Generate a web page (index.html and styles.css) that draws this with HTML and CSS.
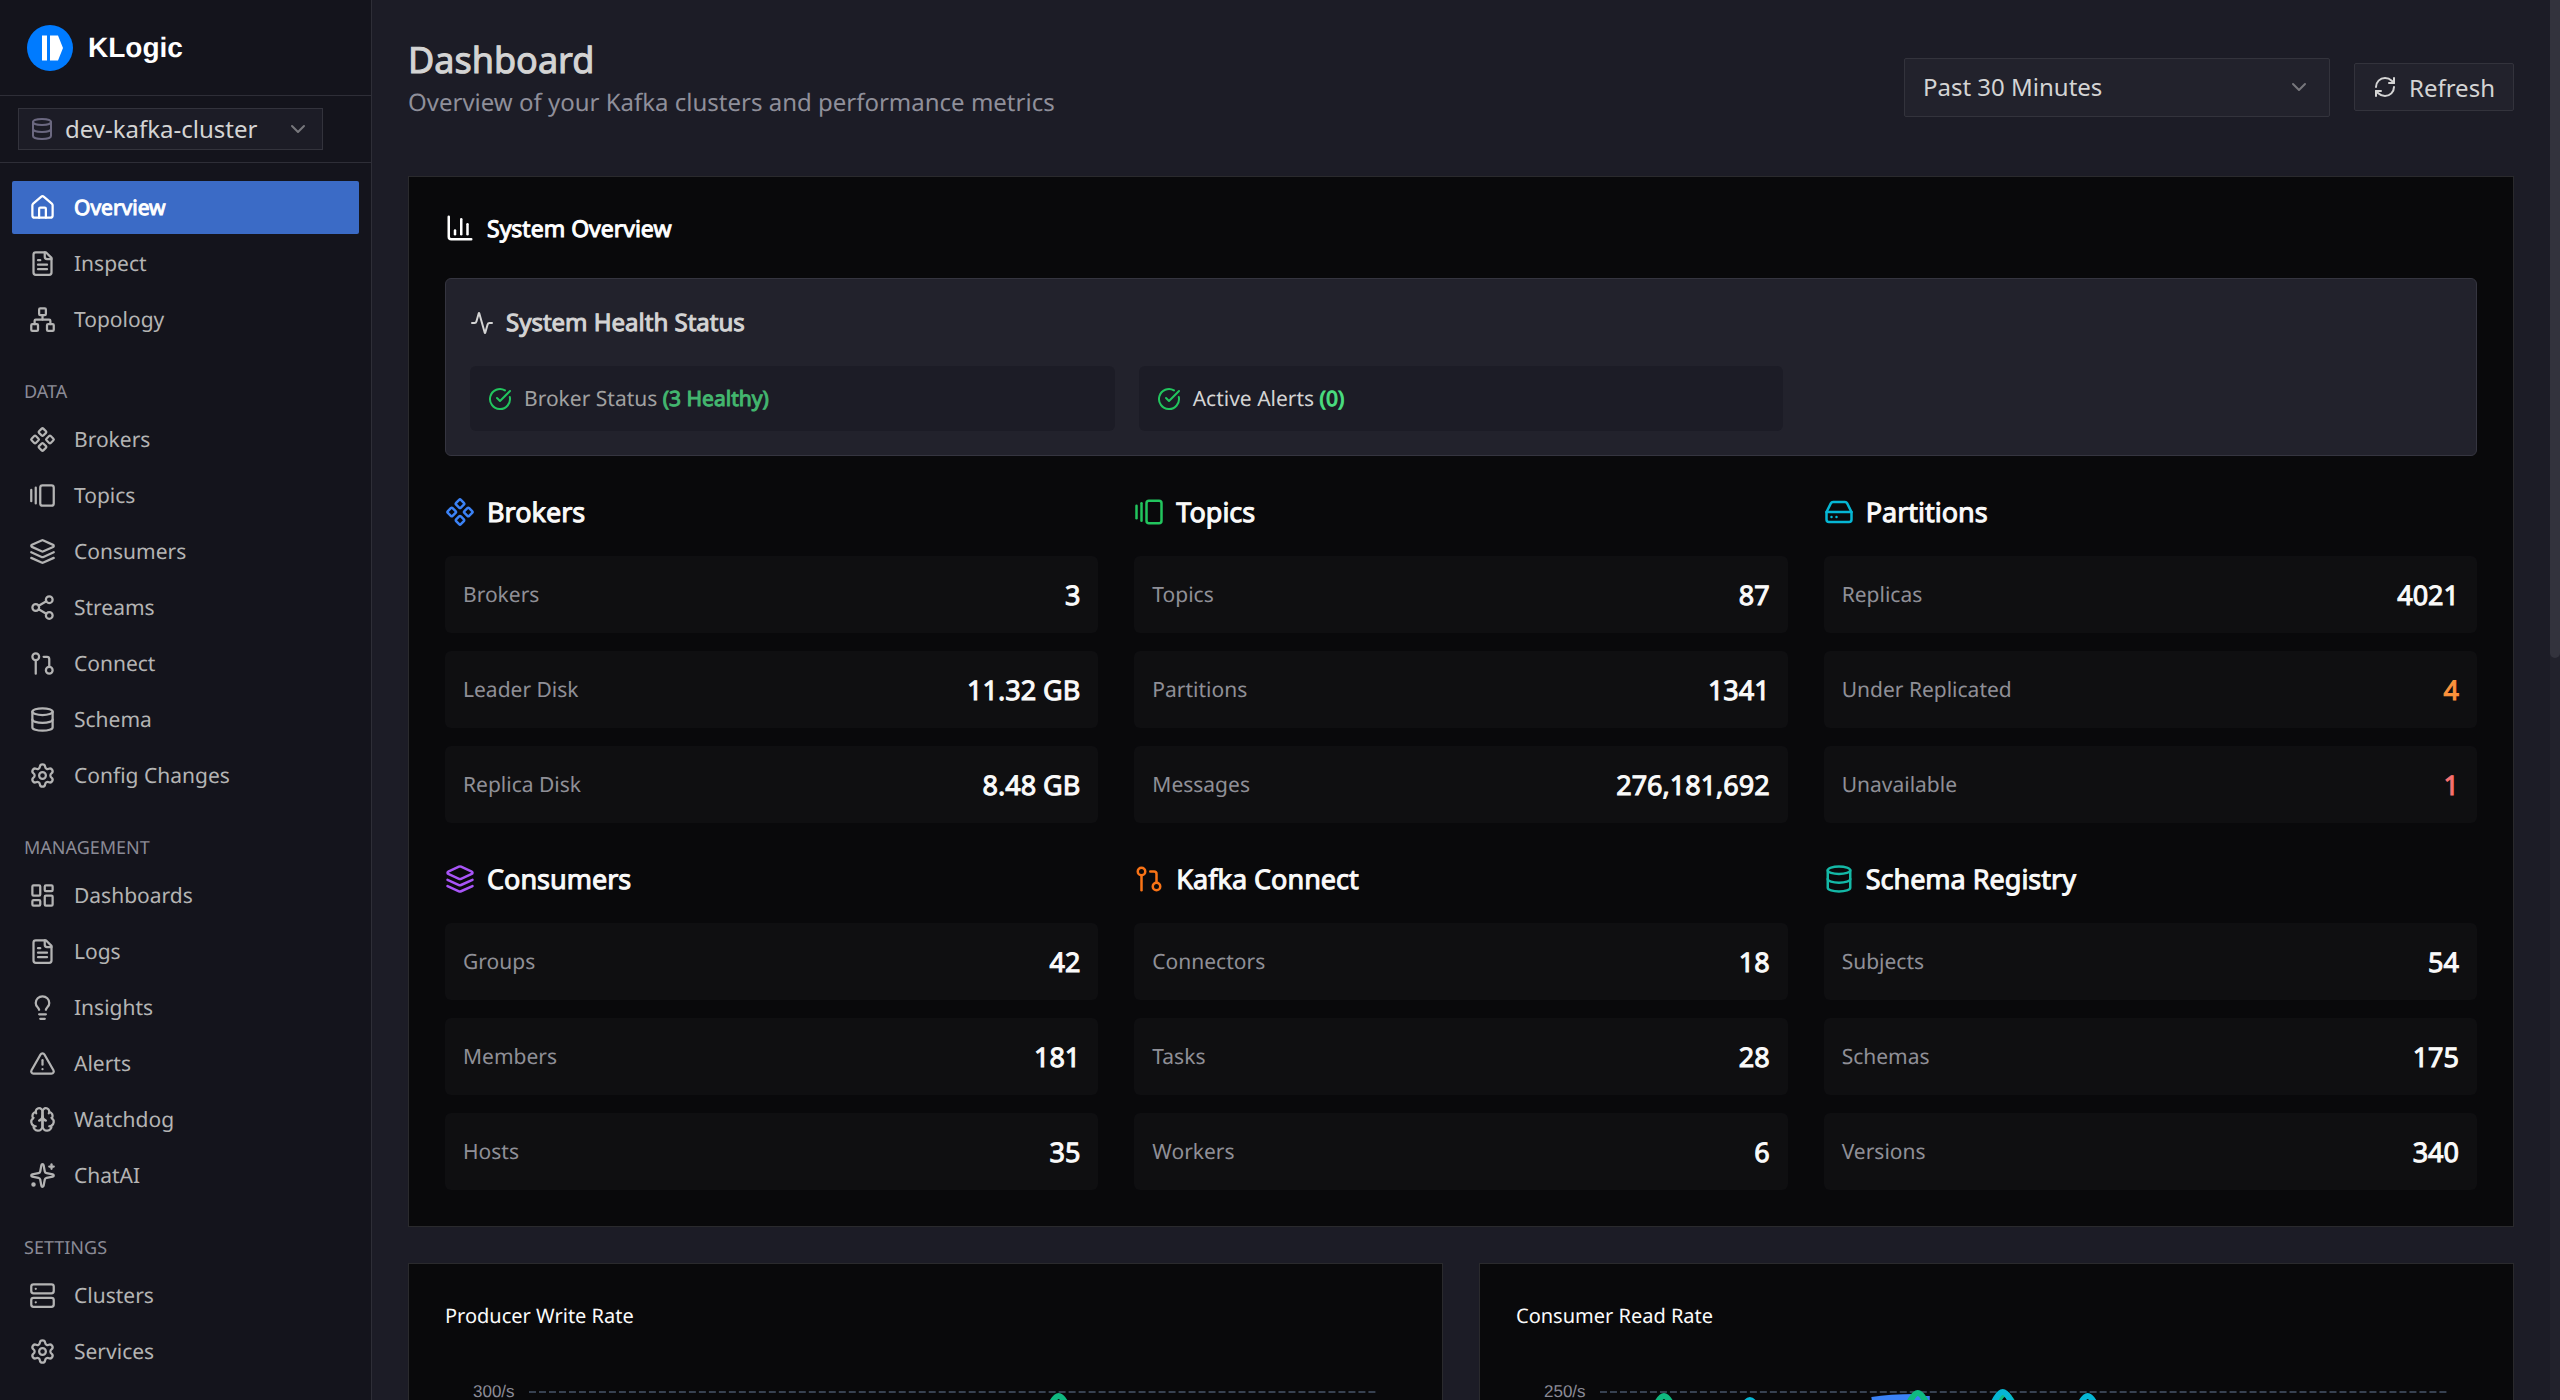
FILE: index.html
```
<!DOCTYPE html>
<html lang="en">

<head>
  <meta charset="UTF-8">
  <meta name="viewport" content="width=device-width, initial-scale=1.0">
  <title>KLogic - Dashboard</title>
  <link rel="stylesheet" href="styles.css">
</head>

<body>

  <!-- Icon set -->
  <svg class="sprite" aria-hidden="true">
    <symbol id="i-home" viewBox="0 0 24 24"><path d="M15 21v-8a1 1 0 0 0-1-1h-4a1 1 0 0 0-1 1v8"/><path d="M3 10a2 2 0 0 1 .709-1.528l7-6a2 2 0 0 1 2.582 0l7 6A2 2 0 0 1 21 10v9a2 2 0 0 1-2 2H5a2 2 0 0 1-2-2z"/></symbol>
    <symbol id="i-file" viewBox="0 0 24 24"><path d="M15 2H6a2 2 0 0 0-2 2v16a2 2 0 0 0 2 2h12a2 2 0 0 0 2-2V7Z"/><path d="M14 2v4a2 2 0 0 0 2 2h4"/><path d="M10 9H8"/><path d="M16 13H8"/><path d="M16 17H8"/></symbol>
    <symbol id="i-network" viewBox="0 0 24 24"><rect x="16" y="16" width="6" height="6" rx="1"/><rect x="2" y="16" width="6" height="6" rx="1"/><rect x="9" y="2" width="6" height="6" rx="1"/><path d="M5 16v-3a1 1 0 0 1 1-1h12a1 1 0 0 1 1 1v3"/><path d="M12 12V8"/></symbol>
    <symbol id="i-component" viewBox="0 0 24 24"><path d="M15.536 11.293a1 1 0 0 0 0 1.414l2.376 2.377a1 1 0 0 0 1.414 0l2.377-2.377a1 1 0 0 0 0-1.414l-2.377-2.377a1 1 0 0 0-1.414 0z"/><path d="M2.297 11.293a1 1 0 0 0 0 1.414l2.377 2.377a1 1 0 0 0 1.414 0l2.377-2.377a1 1 0 0 0 0-1.414L6.088 8.916a1 1 0 0 0-1.414 0z"/><path d="M8.916 17.912a1 1 0 0 0 0 1.415l2.377 2.376a1 1 0 0 0 1.414 0l2.377-2.376a1 1 0 0 0 0-1.415l-2.377-2.376a1 1 0 0 0-1.414 0z"/><path d="M8.916 4.674a1 1 0 0 0 0 1.414l2.377 2.376a1 1 0 0 0 1.414 0l2.377-2.376a1 1 0 0 0 0-1.414l-2.377-2.377a1 1 0 0 0-1.414 0z"/></symbol>
    <symbol id="i-gallery" viewBox="0 0 24 24"><path d="M2 7v10"/><path d="M6 5v14"/><rect width="12" height="18" x="10" y="3" rx="2"/></symbol>
    <symbol id="i-layers" viewBox="0 0 24 24"><path d="m12.83 2.18a2 2 0 0 0-1.66 0L2.6 6.08a1 1 0 0 0 0 1.83l8.58 3.91a2 2 0 0 0 1.66 0l8.58-3.9a1 1 0 0 0 0-1.83Z"/><path d="m22 17.65-9.17 4.16a2 2 0 0 1-1.66 0L2 17.65"/><path d="m22 12.65-9.17 4.16a2 2 0 0 1-1.66 0L2 12.65"/></symbol>
    <symbol id="i-share" viewBox="0 0 24 24"><circle cx="18" cy="5" r="3"/><circle cx="6" cy="12" r="3"/><circle cx="18" cy="19" r="3"/><path d="M8.59 13.51l6.83 3.98"/><path d="M15.41 6.51l-6.82 3.98"/></symbol>
    <symbol id="i-connect" viewBox="0 0 24 24"><circle cx="18" cy="18" r="3"/><circle cx="6" cy="6" r="3"/><path d="M13 6h3a2 2 0 0 1 2 2v7"/><path d="M6 9v12"/></symbol>
    <symbol id="i-database" viewBox="0 0 24 24"><ellipse cx="12" cy="5" rx="9" ry="3"/><path d="M3 5v14a9 3 0 0 0 18 0V5"/><path d="M3 12a9 3 0 0 0 18 0"/></symbol>
    <symbol id="i-settings" viewBox="0 0 24 24"><path d="M9.671 4.136a2.34 2.34 0 0 1 4.659 0 2.34 2.34 0 0 0 3.319 1.915 2.34 2.34 0 0 1 2.33 4.033 2.34 2.34 0 0 0 0 3.831 2.34 2.34 0 0 1-2.33 4.033 2.34 2.34 0 0 0-3.319 1.915 2.34 2.34 0 0 1-4.659 0 2.34 2.34 0 0 0-3.32-1.915 2.34 2.34 0 0 1-2.33-4.033 2.34 2.34 0 0 0 0-3.831A2.34 2.34 0 0 1 6.35 6.051a2.34 2.34 0 0 0 3.319-1.915"/><circle cx="12" cy="12" r="3"/></symbol>
    <symbol id="i-dashboard" viewBox="0 0 24 24"><rect width="7" height="9" x="3" y="3" rx="1"/><rect width="7" height="5" x="14" y="3" rx="1"/><rect width="7" height="9" x="14" y="12" rx="1"/><rect width="7" height="5" x="3" y="16" rx="1"/></symbol>
    <symbol id="i-bulb" viewBox="0 0 24 24"><path d="M15 14c.2-1 .7-1.700 1.500-2.500 1-.9 1.500-2.200 1.500-3.500A6 6 0 0 0 6 8c0 1 .2 2.200 1.500 3.500.7.7 1.300 1.500 1.500 2.500"/><path d="M9 18h6"/><path d="M10 22h4"/></symbol>
    <symbol id="i-alert" viewBox="0 0 24 24"><path d="m21.730 18-8-14a2 2 0 0 0-3.480 0l-8 14A2 2 0 0 0 4 21h16a2 2 0 0 0 1.730-3"/><path d="M12 9v4"/><path d="M12 17h.01"/></symbol>
    <symbol id="i-brain" viewBox="0 0 24 24"><path d="M12 5a3 3 0 1 0-5.997.125 4 4 0 0 0-2.526 5.770 4 4 0 0 0 .556 6.588A4 4 0 1 0 12 18Z"/><path d="M12 5a3 3 0 1 1 5.997.125 4 4 0 0 1 2.526 5.770 4 4 0 0 1-.556 6.588A4 4 0 1 1 12 18Z"/><path d="M15 13a4.500 4.500 0 0 1-3-4 4.500 4.500 0 0 1-3 4"/><path d="M17.599 6.500a3 3 0 0 0 .399-1.375"/><path d="M6.003 5.125A3 3 0 0 0 6.401 6.500"/><path d="M3.477 10.896a4 4 0 0 1 .585-.396"/><path d="M19.938 10.500a4 4 0 0 1 .585.396"/><path d="M6 18a4 4 0 0 1-1.967-.516"/><path d="M19.967 17.484A4 4 0 0 1 18 18"/></symbol>
    <symbol id="i-sparkles" viewBox="0 0 24 24"><path d="M11.017 2.814a1 1 0 0 1 1.966 0l1.051 5.558a2 2 0 0 0 1.594 1.594l5.558 1.051a1 1 0 0 1 0 1.966l-5.558 1.051a2 2 0 0 0-1.594 1.594l-1.051 5.558a1 1 0 0 1-1.966 0l-1.051-5.558a2 2 0 0 0-1.594-1.594l-5.558-1.051a1 1 0 0 1 0-1.966l5.558-1.051a2 2 0 0 0 1.594-1.594z"/><path d="M20 2v4"/><path d="M22 4h-4"/><circle cx="4" cy="20" r="1"/></symbol>
    <symbol id="i-server" viewBox="0 0 24 24"><rect width="20" height="8" x="2" y="2" rx="2"/><rect width="20" height="8" x="2" y="14" rx="2"/><path d="M6 6h.01"/><path d="M6 18h.01"/></symbol>
    <symbol id="i-drive" viewBox="0 0 24 24"><path d="M22 12H2"/><path d="M5.450 5.110 2 12v6a2 2 0 0 0 2 2h16a2 2 0 0 0 2-2v-6l-3.450-6.890A2 2 0 0 0 16.760 4H7.240a2 2 0 0 0-1.790 1.110z"/><path d="M6 16h.01"/><path d="M10 16h.01"/></symbol>
    <symbol id="i-chart" viewBox="0 0 24 24"><path d="M3 3v16a2 2 0 0 0 2 2h16"/><path d="M18 17V9"/><path d="M13 17V5"/><path d="M8 17v-3"/></symbol>
    <symbol id="i-activity" viewBox="0 0 24 24"><path d="M22 12h-2.480a2 2 0 0 0-1.930 1.460l-2.350 8.360a.25.25 0 0 1-.480 0L9.240 2.180a.25.25 0 0 0-.480 0l-2.350 8.360A2 2 0 0 1 4.490 12H2"/></symbol>
    <symbol id="i-check" viewBox="0 0 24 24"><path d="M21.801 10A10 10 0 1 1 17 3.335"/><path d="m9 11 3 3L22 4"/></symbol>
    <symbol id="i-refresh" viewBox="0 0 24 24"><path d="M3 12a9 9 0 0 1 9-9 9.750 9.750 0 0 1 6.740 2.740L21 8"/><path d="M21 3v5h-5"/><path d="M21 12a9 9 0 0 1-9 9 9.750 9.750 0 0 1-6.740-2.740L3 16"/><path d="M8 16H3v5"/></symbol>
    <symbol id="i-chevron" viewBox="0 0 24 24"><path d="m6 9 6 6 6-6"/></symbol>
  </svg>

  <div class="app">

    <!-- Sidebar -->
    <aside class="sidebar">
      <div class="brand">
        <svg class="logo" viewBox="0 0 46 46" aria-hidden="true">
          <circle cx="23" cy="23" r="23" fill="#007bff"/>
          <path d="M15 10.500h5v25h-5zM23 10.500h8l5 12.500-5 12.500h-8z" fill="#fff"/>
        </svg>
        <span>KLogic</span>
      </div>

      <div class="cluster">
        <div class="picker">
          <svg class="icon"><use href="#i-database"/></svg>
          <select aria-label="Cluster">
            <option>dev-kafka-cluster</option>
          </select>
          <svg class="icon chevron"><use href="#i-chevron"/></svg>
        </div>
      </div>

      <nav class="menu">
        <a href="#overview" class="active"><svg class="icon"><use href="#i-home"/></svg>Overview</a>
        <a href="#inspect"><svg class="icon"><use href="#i-file"/></svg>Inspect</a>
        <a href="#topology"><svg class="icon"><use href="#i-network"/></svg>Topology</a>

        <h2>DATA</h2>
        <a href="#brokers"><svg class="icon"><use href="#i-component"/></svg>Brokers</a>
        <a href="#topics"><svg class="icon"><use href="#i-gallery"/></svg>Topics</a>
        <a href="#consumers"><svg class="icon"><use href="#i-layers"/></svg>Consumers</a>
        <a href="#streams"><svg class="icon"><use href="#i-share"/></svg>Streams</a>
        <a href="#connect"><svg class="icon"><use href="#i-connect"/></svg>Connect</a>
        <a href="#schema"><svg class="icon"><use href="#i-database"/></svg>Schema</a>
        <a href="#config"><svg class="icon"><use href="#i-settings"/></svg>Config Changes</a>

        <h2>MANAGEMENT</h2>
        <a href="#dashboards"><svg class="icon"><use href="#i-dashboard"/></svg>Dashboards</a>
        <a href="#logs"><svg class="icon"><use href="#i-file"/></svg>Logs</a>
        <a href="#insights"><svg class="icon"><use href="#i-bulb"/></svg>Insights</a>
        <a href="#alerts"><svg class="icon"><use href="#i-alert"/></svg>Alerts</a>
        <a href="#watchdog"><svg class="icon"><use href="#i-brain"/></svg>Watchdog</a>
        <a href="#chat"><svg class="icon"><use href="#i-sparkles"/></svg>ChatAI</a>

        <h2>SETTINGS</h2>
        <a href="#clusters"><svg class="icon"><use href="#i-server"/></svg>Clusters</a>
        <a href="#services"><svg class="icon"><use href="#i-settings"/></svg>Services</a>
      </nav>
    </aside>

    <!-- Main -->
    <main>
      <header class="page-head">
        <div>
          <h1>Dashboard</h1>
          <p>Overview of your Kafka clusters and performance metrics</p>
        </div>
        <div class="controls">
          <div class="picker picker-lg">
            <select aria-label="Time range">
              <option>Past 30 Minutes</option>
            </select>
            <svg class="icon chevron"><use href="#i-chevron"/></svg>
          </div>
          <button type="button"><svg class="icon"><use href="#i-refresh"/></svg>Refresh</button>
        </div>
      </header>

      <!-- System overview -->
      <section class="card">
        <h2 class="card-title"><svg class="icon icon-lg"><use href="#i-chart"/></svg>System Overview</h2>

        <div class="health">
          <h3><svg class="icon"><use href="#i-activity"/></svg>System Health Status</h3>
          <div class="checks">
            <div class="check"><svg class="icon"><use href="#i-check"/></svg><span>Broker Status <b>(3 Healthy)</b></span></div>
            <div class="check bright"><svg class="icon"><use href="#i-check"/></svg><span>Active Alerts <b>(0)</b></span></div>
          </div>
        </div>

        <div class="groups">
          <div class="group">
            <h3><svg class="icon icon-lg blue"><use href="#i-component"/></svg>Brokers</h3>
            <dl>
              <div class="stat"><dt>Brokers</dt><dd>3</dd></div>
              <div class="stat"><dt>Leader Disk</dt><dd>11.32 GB</dd></div>
              <div class="stat"><dt>Replica Disk</dt><dd>8.48 GB</dd></div>
            </dl>
          </div>
          <div class="group">
            <h3><svg class="icon icon-lg green"><use href="#i-gallery"/></svg>Topics</h3>
            <dl>
              <div class="stat"><dt>Topics</dt><dd>87</dd></div>
              <div class="stat"><dt>Partitions</dt><dd>1341</dd></div>
              <div class="stat"><dt>Messages</dt><dd>276,181,692</dd></div>
            </dl>
          </div>
          <div class="group">
            <h3><svg class="icon icon-lg cyan"><use href="#i-drive"/></svg>Partitions</h3>
            <dl>
              <div class="stat"><dt>Replicas</dt><dd>4021</dd></div>
              <div class="stat"><dt>Under Replicated</dt><dd class="warn">4</dd></div>
              <div class="stat"><dt>Unavailable</dt><dd class="bad">1</dd></div>
            </dl>
          </div>
          <div class="group">
            <h3><svg class="icon icon-lg purple"><use href="#i-layers"/></svg>Consumers</h3>
            <dl>
              <div class="stat"><dt>Groups</dt><dd>42</dd></div>
              <div class="stat"><dt>Members</dt><dd>181</dd></div>
              <div class="stat"><dt>Hosts</dt><dd>35</dd></div>
            </dl>
          </div>
          <div class="group">
            <h3><svg class="icon icon-lg orange"><use href="#i-connect"/></svg>Kafka Connect</h3>
            <dl>
              <div class="stat"><dt>Connectors</dt><dd>18</dd></div>
              <div class="stat"><dt>Tasks</dt><dd>28</dd></div>
              <div class="stat"><dt>Workers</dt><dd>6</dd></div>
            </dl>
          </div>
          <div class="group">
            <h3><svg class="icon icon-lg teal"><use href="#i-database"/></svg>Schema Registry</h3>
            <dl>
              <div class="stat"><dt>Subjects</dt><dd>54</dd></div>
              <div class="stat"><dt>Schemas</dt><dd>175</dd></div>
              <div class="stat"><dt>Versions</dt><dd>340</dd></div>
            </dl>
          </div>
        </div>
      </section>

      <!-- Charts -->
      <div class="charts">
        <section class="card chart-card">
          <h2>Producer Write Rate</h2>
          <div class="plot">
            <span class="tick">300/s</span>
            <svg class="lines" viewBox="0 0 850 300" preserveAspectRatio="none">
              <path class="grid-line" d="M0 7H850"/>
              <path class="line-green" d="M508 50C518 30 524 11 530 11S542 30 552 50"/>
            </svg>
          </div>
        </section>
        <section class="card chart-card">
          <h2>Consumer Read Rate</h2>
          <div class="plot">
            <span class="tick">250/s</span>
            <svg class="lines" viewBox="0 0 850 300" preserveAspectRatio="none">
              <path class="grid-line" d="M0 7H850"/>
              <path class="line-blue" d="M272 15C290 12 305 12 316 12"/>
              <path class="line-blue" d="M300 14H330"/>
              <path class="line-green" d="M42 50C52 30 58 11 64 11S76 30 86 50"/>
              <path class="line-green" d="M296 46C306 26 312 8 318 8S330 26 340 46"/>
              <path class="line-green" d="M383 48C393 28 399 9 405 9S417 28 427 48"/>
              <path class="line-cyan" d="M128 54C138 34 144 15 150 15S162 34 172 54"/>
              <path class="line-cyan" d="M381 45C391 25 397 7 403 7S415 25 425 45"/>
              <path class="line-cyan" d="M466 50C476 30 482 11 488 11S500 30 510 50"/>
            </svg>
          </div>
        </section>
      </div>
    </main>
  </div>

</body>

</html>
```
FILE: styles.css
```
* {
  box-sizing: border-box;
}

body {
  margin: 0;
  background: #1c1c26;
  color: #d4d4d4;
  font-family: "Noto Sans", sans-serif;
  font-size: 24px;
  text-rendering: geometricPrecision;
  height: 100vh;
  overflow: hidden;
}

/* scrollbar thumb */
body::after {
  content: "";
  position: absolute;
  top: 0;
  right: 0;
  width: 10px;
  height: 47vh;
  border-radius: 0 0 5px 5px;
  background: #33333d;
}

h1, h2, h3, p, dl, dd {
  margin: 0;
  font-weight: 400;
}

.sprite {
  display: none;
}

.app {
  display: flex;
  height: 100vh;
}

.icon {
  width: 24px;
  height: 24px;
  flex: none;
  fill: none;
  stroke: currentColor;
  stroke-width: 2;
  stroke-linecap: round;
  stroke-linejoin: round;
}

.icon-lg {
  width: 30px;
  height: 30px;
}

/* Heavier text */
h1, h3, .card-title, .stat dd, .check b, .menu a.active {
  -webkit-text-stroke: 1px currentColor;
}

/* Sidebar */
.sidebar {
  width: 372px;
  flex: none;
  background: #14141c;
  border-right: 1px solid #2e2e37;
}

.brand {
  display: flex;
  align-items: center;
  gap: 15px;
  height: 96px;
  padding: 0 27px;
  border-bottom: 1px solid #2e2e37;
  color: #fff;
  font: bold 28px "Liberation Sans", sans-serif;
}

.logo {
  width: 46px;
  height: 46px;
}

.cluster {
  padding: 12px 48px 12px 18px;
  border-bottom: 1px solid #2e2e37;
}

.picker {
  display: flex;
  align-items: center;
  position: relative;
  height: 42px;
  border: 1px solid #33333c;
  background: #1c1c26;
  color: #6b6880;
}

.cluster .icon:first-child {
  position: absolute;
  left: 11px;
}

select {
  appearance: none;
  width: 100%;
  height: 100%;
  padding: 0 40px 2px 46px;
  border: 0;
  background: transparent;
  color: #d4d4d4;
  font: inherit;
}

.picker .chevron {
  position: absolute;
  right: 12px;
  color: #77777c;
  pointer-events: none;
}

.menu {
  padding: 18px 12px;
}

.menu a {
  display: flex;
  align-items: center;
  gap: 18px;
  height: 53px;
  margin-bottom: 3px;
  padding: 0 17px;
  border-radius: 2px;
  color: #b4b4b4;
  font-size: 21px;
  text-decoration: none;
}

.menu .icon {
  width: 27px;
  height: 27px;
}

.menu a.active {
  background: #3b6bc6;
  color: #fff;
}

.menu h2 {
  padding: 27px 12px 5px;
  color: #8b8b96;
  font-size: 18px;
  line-height: 32px;
}

/* Page header */
main {
  flex: 1;
  min-width: 0;
  padding: 36px 36px 0;
  border-right: 10px solid #22222c;
  overflow: hidden;
}

.page-head {
  display: flex;
  justify-content: space-between;
  height: 140px;
}

h1 {
  font-size: 36px;
  line-height: 48px;
}

.page-head p {
  color: #8f8f9a;
  line-height: 38px;
}

.controls {
  display: flex;
  align-items: center;
  gap: 24px;
  height: 102px;
}

.picker-lg {
  width: 426px;
  height: 59px;
  background: #22222c;
  border-radius: 2px;
}

.picker-lg select {
  padding-left: 18px;
}

.picker-lg .chevron {
  right: 18px;
}

button {
  display: flex;
  align-items: center;
  gap: 12px;
  height: 48px;
  padding: 0 18px;
  border: 1px solid #33333c;
  border-radius: 2px;
  background: #22222c;
  color: #d4d4d4;
  font: inherit;
}

/* Cards */
.card {
  padding: 36px;
  border: 1px solid #2a2a2d;
  background: #09090b;
}

.card-title {
  display: flex;
  align-items: center;
  gap: 12px;
  margin-bottom: 35px;
  color: #fff;
  font-size: 23px;
  line-height: 30px;
}

.health {
  padding: 24px;
  border: 1px solid #353540;
  border-radius: 6px;
  background: #22222c;
}

.health h3 {
  display: flex;
  align-items: center;
  gap: 12px;
  margin-bottom: 23px;
  font-size: 24px;
  line-height: 40px;
}

.checks {
  display: grid;
  grid-template-columns: repeat(3, 1fr);
  gap: 24px;
}

.check {
  display: flex;
  align-items: center;
  gap: 12px;
  height: 65px;
  padding: 0 18px;
  border-radius: 6px;
  background: #1c1c26;
  color: #a1a1a1;
  font-size: 21px;
}

.check .icon {
  color: #22c55e;
}

.check b {
  color: #43b76f;
  font-weight: 400;
}

.bright {
  color: #d4d4d4;
}

.bright b {
  color: #4ade80;
}

.groups {
  display: grid;
  grid-template-columns: repeat(3, 1fr);
  gap: 36px;
  margin-top: 36px;
}

.group h3 {
  display: flex;
  align-items: center;
  gap: 12px;
  margin-bottom: 24px;
  color: #fafafa;
  font-size: 27px;
  line-height: 40px;
}

.group dl {
  display: grid;
  gap: 18px;
}

.stat {
  display: flex;
  align-items: center;
  justify-content: space-between;
  height: 77px;
  padding: 0 18px;
  border-radius: 6px;
  background: #0f0f11;
}

.stat dt {
  color: #8f8f97;
  font-size: 21px;
}

.stat dd {
  color: #fafafa;
  font-size: 27px;
}

.stat .warn { color: #fb923c; }
.stat .bad { color: #f87171; }

.blue { color: #3b82f6; }
.green { color: #22c55e; }
.cyan { color: #06b6d4; }
.purple { color: #a855f7; }
.orange { color: #f97316; }
.teal { color: #14b8a6; }

/* Charts */
.charts {
  display: grid;
  grid-template-columns: repeat(2, minmax(0, 1fr));
  gap: 36px;
  margin-top: 36px;
}

.chart-card h2 {
  color: #fafafa;
  font-size: 20px;
  line-height: 32px;
}

.plot {
  display: flex;
  align-items: flex-start;
  gap: 14px;
  margin-top: 53px;
  padding: 0 28px;
}

.tick {
  color: #8b8b96;
  font: 17px/14px "Liberation Sans", sans-serif;
}

.lines {
  flex: 1;
  min-width: 0;
  height: 300px;
  fill: none;
  stroke-width: 6;
}

.grid-line {
  stroke: #374151;
  stroke-width: 2;
  stroke-dasharray: 7 3;
}

.line-green { stroke: #10b981; }
.line-blue { stroke: #3b82f6; }
.line-cyan { stroke: #06b6d4; }
```
